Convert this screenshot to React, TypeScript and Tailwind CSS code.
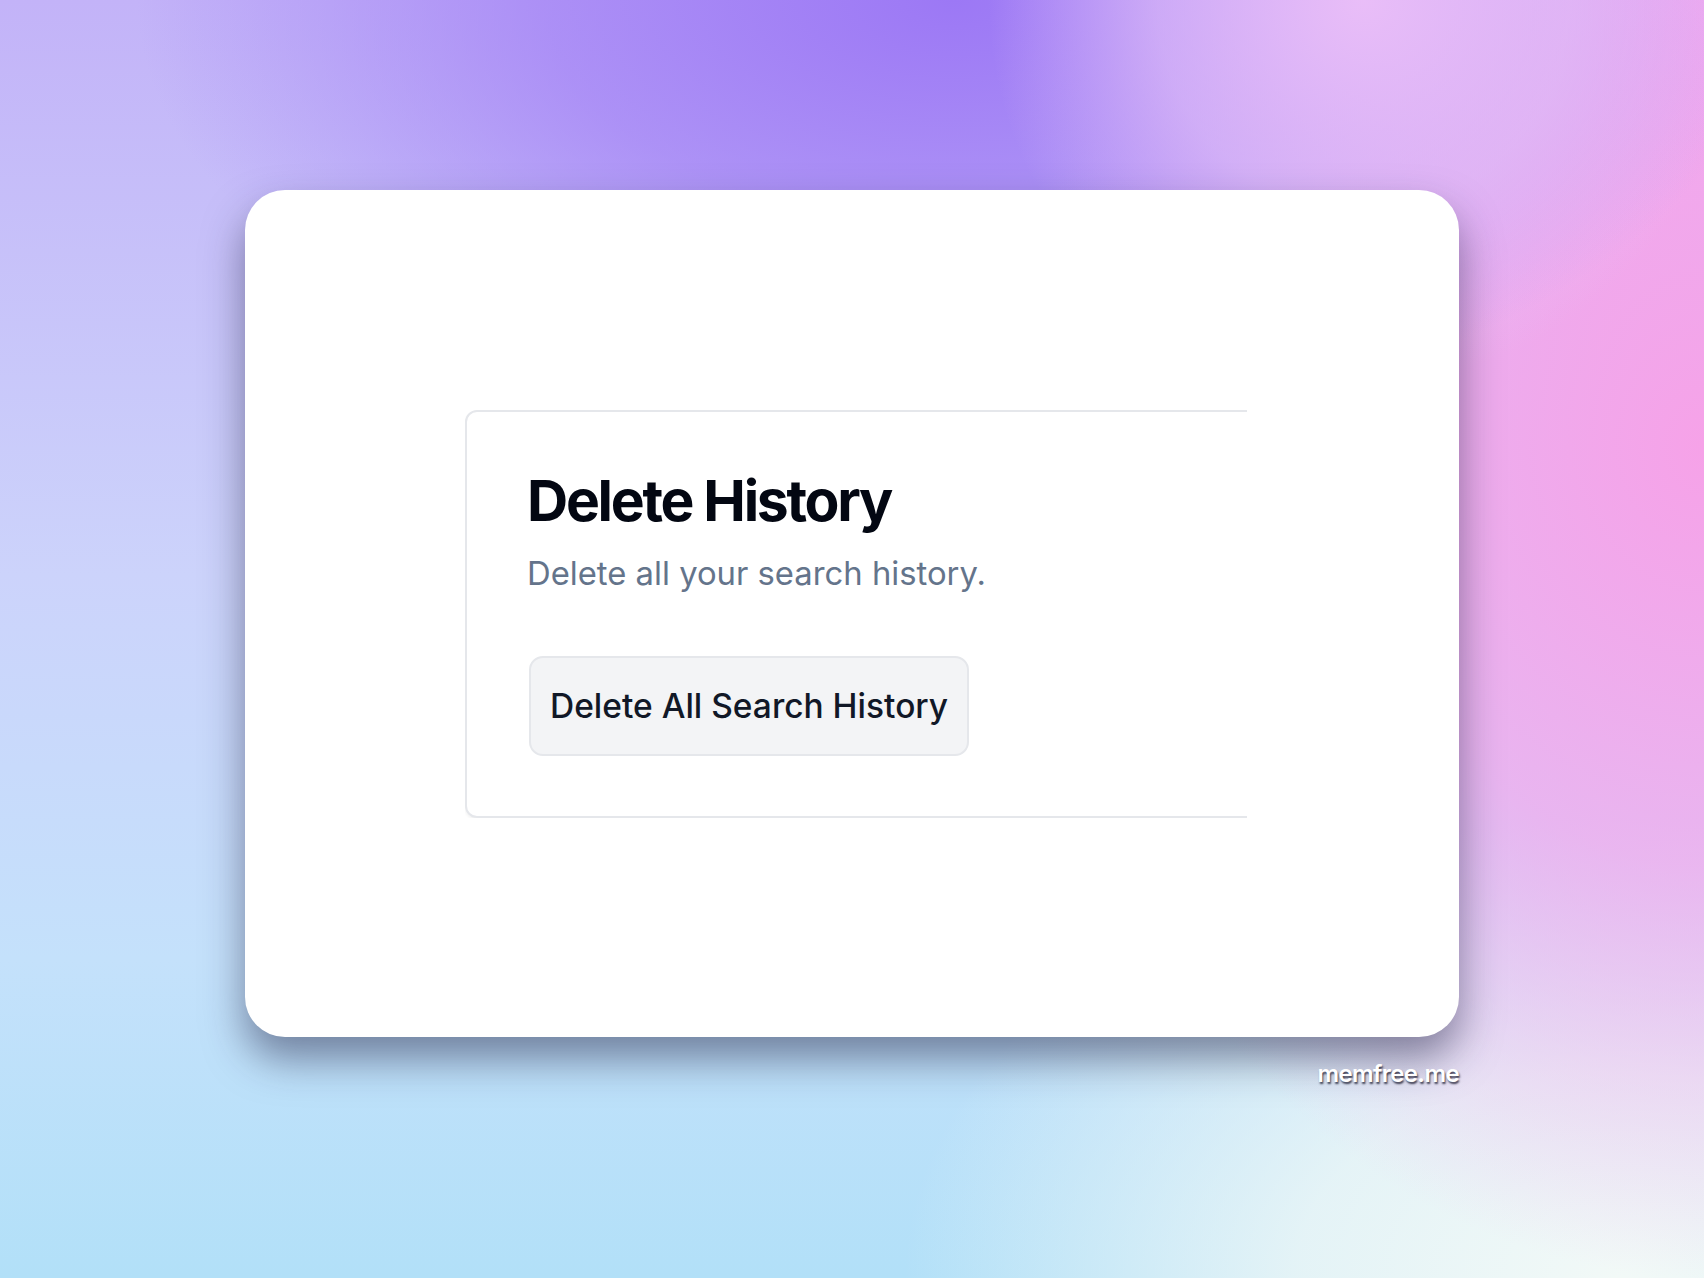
import React from "react";

// Backdrop colours sampled from the screenshot.
const backdrop =
  "bg-[radial-gradient(ellipse_22%_30%_at_80%_0%,rgba(236,192,248,0.95)_0%,rgba(232,196,248,0.6)_55%,transparent_100%),radial-gradient(ellipse_48%_34%_at_56%_0%,#9c78f5_0%,rgba(162,128,245,0.7)_50%,transparent_100%),radial-gradient(ellipse_40%_65%_at_100%_35%,#f6a2e8_0%,rgba(244,168,236,0.75)_50%,transparent_100%),radial-gradient(ellipse_30%_30%_at_100%_0%,#f3b2f6_0%,transparent_100%),radial-gradient(ellipse_42%_36%_at_95%_100%,#f2f9f7_0%,rgba(240,248,246,0.8)_45%,transparent_100%),linear-gradient(180deg,#c3b3f8_0%,#ccd3fb_45%,#c4e1fb_75%,#b2e0f8_100%)]";

function DeleteHistoryCard() {
  return (
    <div className="w-[900px] rounded-[12px] border-2 border-[#e5e7eb] bg-white p-[60px] shadow-[0_2px_3px_rgba(0,0,0,0.05)]">
      <h2 className="text-[57px] font-bold leading-none tracking-[-0.04em] text-[#030712]">
        Delete History
      </h2>
      <p className="mt-[22px] text-[32.8px] leading-[44px] text-[#64748b]">
        Delete all your search history.
      </p>
      <button className="mt-[61px] ml-[2px] h-[100px] rounded-[14px] border-2 border-[#e5e7eb] bg-[#f3f4f6] px-[19px] text-[33.5px] font-medium text-[#111827]">
        Delete All Search History
      </button>
    </div>
  );
}

export default function App() {
  return (
    <div
      className={`flex min-h-screen w-full flex-col items-center pt-[190px] font-['Inter','Noto_Sans',sans-serif] ${backdrop}`}
    >
      <div className="flex w-[1214px] rounded-[40px] bg-white pt-[220px] pb-[219px] pl-[220px] pr-[212px] shadow-[0_22px_40px_rgba(35,35,70,0.5)]">
        <div className="flex-1 overflow-hidden">
          <DeleteHistoryCard />
        </div>
      </div>
      <div className="mt-[19px] w-[1214px] text-right text-[24px] font-semibold tracking-tight text-white [text-shadow:1px_2px_2px_rgba(20,20,40,0.8)]">
        memfree.me
      </div>
    </div>
  );
}
